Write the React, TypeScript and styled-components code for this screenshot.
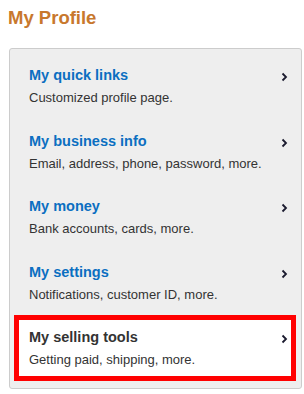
import React from "react";
import styled, { createGlobalStyle } from "styled-components";

const Global = createGlobalStyle`
  html, body { margin: 0; padding: 0; background: #fff; }
  body { font-family: "Liberation Sans", Arial, sans-serif; }
`;

const Page = styled.div`
  padding: 7px 3px 0 9px;
  width: 304px;
  box-sizing: border-box;
`;

const Heading = styled.h1`
  margin: 0 0 0 -1px;
  font-size: 18.5px;
  line-height: 22px;
  font-weight: bold;
  color: #c8782d;
`;

const Panel = styled.div`
  margin-top: 19px;
  width: 293px;
  box-sizing: border-box;
  background: #eeeeee;
  border: 1px solid #cccccc;
  border-radius: 3px;
  padding: 4px 5px 7px 4px;
  display: flex;
  flex-direction: column;
`;

const Item = styled.a<{ $selected?: boolean }>`
  display: flex;
  align-items: flex-start;
  justify-content: space-between;
  height: 65.5px;
  box-sizing: border-box;
  border: 5px solid ${(p) => (p.$selected ? "#ff0000" : "transparent")};
  background: ${(p) => (p.$selected ? "#ffffff" : "transparent")};
  padding: 8px 3px 0 10px;
  text-decoration: none;
  cursor: pointer;
`;

const TextCol = styled.div`
  display: flex;
  flex-direction: column;
  gap: 6px;
`;

const Title = styled.span<{ $selected?: boolean }>`
  font-size: 14.5px;
  line-height: 18px;
  font-weight: bold;
  color: ${(p) => (p.$selected ? "#333333" : "#0b6fc1")};
`;

const Desc = styled.span`
  font-size: 13px;
  line-height: 16px;
  color: #333333;
`;

const Chevron = styled.svg`
  margin-top: 6px;
  flex: none;
`;

const items = [
  { title: "My quick links", desc: "Customized profile page." },
  { title: "My business info", desc: "Email, address, phone, password, more." },
  { title: "My money", desc: "Bank accounts, cards, more." },
  { title: "My settings", desc: "Notifications, customer ID, more." },
  { title: "My selling tools", desc: "Getting paid, shipping, more.", selected: true },
];

export default function App() {
  return (
    <>
      <Global />
      <Page>
        <Heading>My Profile</Heading>
        <Panel>
          {items.map((it) => (
            <Item key={it.title} $selected={it.selected}>
              <TextCol>
                <Title $selected={it.selected}>{it.title}</Title>
                <Desc>{it.desc}</Desc>
              </TextCol>
              <Chevron width="7" height="10" viewBox="0 0 7 10">
                <polyline points="1.5,1.5 5,5 1.5,8.5" fill="none" stroke="#1a1a2e" strokeWidth="1.8" />
              </Chevron>
            </Item>
          ))}
        </Panel>
      </Page>
    </>
  );
}
